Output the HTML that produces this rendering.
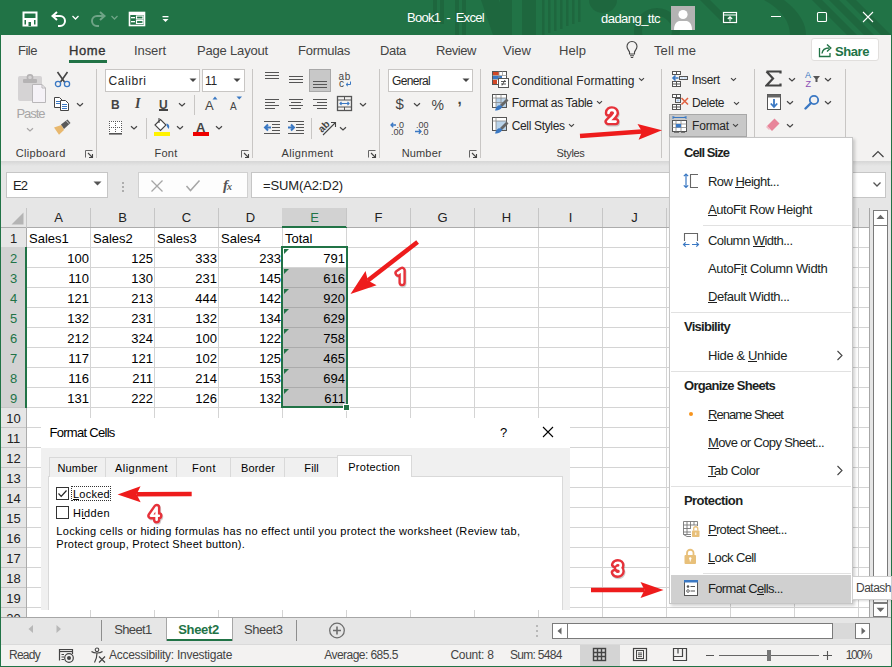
<!DOCTYPE html><html><head><meta charset="utf-8"><style>
html,body{margin:0;padding:0;width:892px;height:667px;overflow:hidden;background:#f3f2f1}
body>div,body>svg{position:absolute}
.t{white-space:nowrap;font-family:"Liberation Sans",sans-serif}
</style></head><body>
<div style="left:0px;top:0px;width:892px;height:667px;background:#f3f2f1"></div>
<div style="left:0px;top:0px;width:892px;height:35px;background:#217346"></div>
<svg style="position:absolute;left:0px;top:0px;" width="892" height="35" viewBox="0 0 892 35">
<g fill="#184f30" opacity="0.32">
<rect x="433" y="0" width="4" height="24"/>
<rect x="440" y="0" width="4" height="24"/>
<rect x="455" y="0" width="4" height="35"/>
<rect x="462" y="0" width="4" height="35"/>
<polygon points="481,0 499,0 511,35 493,35"/>
<rect x="500" y="0" width="12" height="35"/>
<rect x="522" y="0" width="14" height="35" opacity="1"/>
<rect x="542" y="0" width="2.5" height="35"/>
<rect x="548" y="0" width="2.5" height="33"/>
<rect x="554" y="0" width="2.5" height="31"/>
<rect x="560" y="0" width="2.5" height="29"/>
<rect x="566" y="0" width="2.5" height="26"/>
<rect x="572" y="0" width="2.5" height="24"/>
<rect x="578" y="0" width="2.5" height="22"/>
<path d="M589 0 A14 13 0 0 0 617 0 Z"/>
<path d="M764 0 L784 0 C800 12 806 24 806 35 L790 35 C790 22 782 10 764 0 Z"/>
<polygon points="812,0 822,0 857,35 847,35"/>
<polygon points="829,0 839,0 874,35 864,35"/>
<polygon points="846,0 856,0 891,35 881,35"/>
<polygon points="700,0 710,0 735,25 725,25"/>
</g>
<circle cx="657" cy="31" r="19" fill="none" stroke="#184f30" stroke-width="8" opacity="0.32"/>
</svg>
<svg style="position:absolute;left:20px;top:9px;" width="20" height="20" viewBox="0 0 20 20"><rect x="3.5" y="3.5" width="13" height="13" fill="none" stroke="#ffffff" stroke-width="2"/><rect x="4" y="9" width="12" height="2" fill="#ffffff"/><rect x="6" y="10" width="8" height="7" fill="#ffffff"/><rect x="8.5" y="13" width="2.5" height="4" fill="#217346"/></svg>
<svg style="position:absolute;left:49px;top:9px;" width="20" height="18" viewBox="0 0 20 18"><path d="M4 7 H11 A5 5 0 0 1 11 17 H9" fill="none" stroke="#ffffff" stroke-width="2"/><path d="M8 3 L3.5 7 L8 11" fill="none" stroke="#ffffff" stroke-width="2"/></svg>
<svg style="position:absolute;left:71px;top:14px;" width="9" height="7" viewBox="0 0 9 7"><path d="M1.5 2 L4.5 5 L7.5 2" fill="none" stroke="#ffffff" stroke-width="1.3"/></svg>
<svg style="position:absolute;left:88px;top:9px;" width="20" height="18" viewBox="0 0 20 18"><g opacity="0.35"><path d="M16 7 H9 A5 5 0 0 0 9 17 H11" fill="none" stroke="#ffffff" stroke-width="2"/><path d="M12 3 L16.5 7 L12 11" fill="none" stroke="#ffffff" stroke-width="2"/></g></svg>
<svg style="position:absolute;left:110px;top:14px;" width="9" height="7" viewBox="0 0 9 7"><path d="M1.5 2 L4.5 5 L7.5 2" fill="none" stroke="#ffffff" stroke-width="1.3" opacity="0.35"/></svg>
<svg style="position:absolute;left:128px;top:11px;" width="18" height="16" viewBox="0 0 18 16"><rect x="1.5" y="1.5" width="15" height="13" fill="none" stroke="#ffffff" stroke-width="1.6"/><rect x="1" y="1" width="16" height="3" fill="#ffffff"/><rect x="3" y="6" width="4" height="1.3" fill="#ffffff"/><rect x="3" y="10" width="4" height="1.3" fill="#ffffff"/><rect x="8.5" y="5" width="6.5" height="3" fill="none" stroke="#ffffff" stroke-width="1.2"/><rect x="8.5" y="9.5" width="6.5" height="3" fill="none" stroke="#ffffff" stroke-width="1.2"/></svg>
<svg style="position:absolute;left:161px;top:14px;" width="9" height="10" viewBox="0 0 9 10"><rect x="1.5" y="2" width="6" height="1.3" fill="#ffffff"/><path d="M1.5 5 H7.5 L4.5 8 Z" fill="#ffffff"/></svg>
<div class="t" style="left:407.0px;top:11px;font-size:13px;line-height:13px;color:#ffffff;letter-spacing:-0.70px;">Book1 &nbsp;- &nbsp;Excel</div>
<div class="t" style="left:601.0px;top:12px;font-size:13px;line-height:13px;color:#ffffff;letter-spacing:-0.54px;">dadang_ttc</div>
<svg style="position:absolute;left:671px;top:6px;" width="24" height="24" viewBox="0 0 24 24"><rect width="24" height="24" fill="#b3b3b3"/><circle cx="12" cy="8.5" r="4.6" fill="#fff"/><path d="M3 24 C3 17 6.5 15 9 15 H15 C17.5 15 21 17 21 24 Z" fill="#fff"/></svg>
<svg style="position:absolute;left:721px;top:10px;" width="17" height="14" viewBox="0 0 17 14"><rect x="2.5" y="2.5" width="13" height="10" fill="none" stroke="#ffffff" stroke-width="1.2"/><rect x="2" y="4.5" width="14" height="1" fill="#ffffff"/><path d="M9 11.5 V6.8 M6.8 9 L9 6.8 L11.2 9" fill="none" stroke="#ffffff" stroke-width="1.1"/></svg>
<div style="left:771px;top:16px;width:10px;height:1px;background:#fff"></div>
<svg style="position:absolute;left:815px;top:10px;" width="14" height="14" viewBox="0 0 14 14"><rect x="2.5" y="2.5" width="9" height="9" rx="1" fill="none" stroke="#ffffff" stroke-width="1.1"/></svg>
<svg style="position:absolute;left:861px;top:10px;" width="14" height="14" viewBox="0 0 14 14"><path d="M2 2 L12 12 M12 2 L2 12" stroke="#ffffff" stroke-width="1.1"/></svg>
<div class="t" style="left:18.0px;top:44px;font-size:13px;line-height:13px;color:#444444;letter-spacing:-0.49px;">File</div>
<div class="t" style="left:69.0px;top:44px;font-size:13px;line-height:13px;color:#333333;letter-spacing:0.58px;-webkit-text-stroke:0.35px #333;">Home</div>
<div class="t" style="left:134.0px;top:44px;font-size:13px;line-height:13px;color:#444444;letter-spacing:-0.09px;">Insert</div>
<div class="t" style="left:197.0px;top:44px;font-size:13px;line-height:13px;color:#444444;letter-spacing:-0.18px;">Page Layout</div>
<div class="t" style="left:298.0px;top:44px;font-size:13px;line-height:13px;color:#444444;letter-spacing:-0.27px;">Formulas</div>
<div class="t" style="left:380.0px;top:44px;font-size:13px;line-height:13px;color:#444444;letter-spacing:-0.37px;">Data</div>
<div class="t" style="left:436.0px;top:44px;font-size:13px;line-height:13px;color:#444444;letter-spacing:-0.44px;">Review</div>
<div class="t" style="left:503.0px;top:44px;font-size:13px;line-height:13px;color:#444444;letter-spacing:0.01px;">View</div>
<div class="t" style="left:559.0px;top:44px;font-size:13px;line-height:13px;color:#444444;letter-spacing:0.06px;">Help</div>
<div class="t" style="left:654.0px;top:44px;font-size:13px;line-height:13px;color:#444444;letter-spacing:0.12px;">Tell me</div>
<div style="left:69px;top:60px;width:38px;height:3px;background:#217346"></div>
<svg style="position:absolute;left:624px;top:39px;" width="16" height="20" viewBox="0 0 16 20"><path d="M8 2.5 C4.6 2.5 3 5 3 7.5 C3 10 5 11.5 5.5 13 V15 H10.5 V13 C11 11.5 13 10 13 7.5 C13 5 11.4 2.5 8 2.5 Z" fill="none" stroke="#444" stroke-width="1.1"/><path d="M6 16.8 H10 M6.8 18.5 H9.2" stroke="#444" stroke-width="1.1"/></svg>
<div style="left:811px;top:38px;width:68px;height:23px;background:#fff;border:1px solid #e1dfdd;border-radius:3px;box-sizing:border-box"></div>
<svg style="position:absolute;left:818px;top:42px;" width="15" height="16" viewBox="0 0 15 16"><path d="M1.5 6 V14.5 H12 V11" fill="none" stroke="#217346" stroke-width="1.3"/><path d="M4 11.5 C4.5 7.5 7 6 11 6" fill="none" stroke="#217346" stroke-width="1.4"/><path d="M9 2.5 L12.8 6 L9 9.5" fill="none" stroke="#217346" stroke-width="1.4"/></svg>
<div class="t" style="left:835.0px;top:45px;font-size:13px;line-height:13px;color:#217346;letter-spacing:-0.43px;font-weight:bold;">Share</div>
<svg style="position:absolute;left:16px;top:71px;" width="32" height="34" viewBox="0 0 32 34"><rect x="2" y="5" width="24" height="25" rx="2" fill="#d5d3d4"/>
<rect x="7" y="8" width="14" height="4" rx="1" fill="#b5b3b4"/><circle cx="14" cy="6.5" r="2.6" fill="none" stroke="#b5b3b4" stroke-width="1.6"/>
<path d="M16.5 13.5 H26 L29.5 17 V31.5 H16.5 Z" fill="#f5f2f7" stroke="#b9b7b9" stroke-width="1"/><path d="M26 13.5 V17 H29.5" fill="none" stroke="#b9b7b9" stroke-width="1"/></svg>
<div class="t" style="left:16.5px;top:107px;font-size:13px;line-height:13px;color:#a8a6a6;letter-spacing:-1.05px;">Paste</div>
<svg style="position:absolute;left:26px;top:127px;" width="8" height="6" viewBox="0 0 8 6"><path d="M1 1.2 L4.0 4 L7 1.2" fill="none" stroke="#a8a6a6" stroke-width="1.2"/></svg>
<svg style="position:absolute;left:54px;top:71px;" width="17" height="17" viewBox="0 0 17 17"><path d="M3.5 1 L10.5 11 M13.5 1 L6.5 11" stroke="#444" stroke-width="1.6"/>
<circle cx="4" cy="13" r="2.6" fill="none" stroke="#3a78c3" stroke-width="1.3"/><circle cx="13" cy="13" r="2.6" fill="none" stroke="#3a78c3" stroke-width="1.3"/></svg>
<svg style="position:absolute;left:53px;top:96px;" width="18" height="16" viewBox="0 0 18 16"><path d="M1.5 1.5 H6.5 L9.5 4.5 V11.5 H1.5 Z" fill="#fff" stroke="#444" stroke-width="1"/>
<rect x="3" y="5" width="4" height="1" fill="#3a78c3"/><rect x="3" y="7" width="4" height="1" fill="#3a78c3"/>
<path d="M7.5 4.5 H12.5 L15.5 7.5 V14.5 H7.5 Z" fill="#fff" stroke="#444" stroke-width="1"/>
<rect x="9" y="8" width="5" height="1" fill="#3a78c3"/><rect x="9" y="10" width="5" height="1" fill="#3a78c3"/><rect x="9" y="12" width="5" height="1" fill="#3a78c3"/></svg>
<svg style="position:absolute;left:76px;top:102px;" width="8" height="6" viewBox="0 0 8 6"><path d="M1 1.2 L4.0 4 L7 1.2" fill="none" stroke="#444444" stroke-width="1.2"/></svg>
<svg style="position:absolute;left:53px;top:118px;" width="19" height="19" viewBox="0 0 19 19"><path d="M1 9.5 L8.5 7 L11 12 L6 16.8 Z" fill="#e8b86e"/>
<path d="M8 6.5 L14.5 1.5 L17.5 5 L11 11 Z" fill="#5a5a5a"/><path d="M13.2 2.7 L15.8 5.6" stroke="#f3f2f1" stroke-width="0.8"/></svg>
<div class="t" style="left:15.7px;top:148px;font-size:11px;line-height:11px;color:#3b3a39;letter-spacing:0.32px;">Clipboard</div>
<svg style="position:absolute;left:85px;top:150px;" width="9" height="8" viewBox="0 0 9 8"><path d="M0.5 7.5 V0.5 H7.5" fill="none" stroke="#666" stroke-width="1"/><path d="M3 3 L7.5 7.5 M7.5 4 V7.5 H4" fill="none" stroke="#444" stroke-width="1.1"/></svg>
<div style="left:96px;top:69px;width:1px;height:89px;background:#c8c6c4"></div>
<div style="left:105px;top:69px;width:95px;height:23px;background:#fff;border:1px solid #c8c6c4;box-sizing:border-box"></div>
<div class="t" style="left:108.5px;top:75px;font-size:12px;line-height:12px;color:#262626;letter-spacing:0.57px;">Calibri</div>
<svg style="position:absolute;left:189px;top:78px;" width="8" height="5" viewBox="0 0 8 5"><path d="M0.5 0.5 H7.5 L4 4 Z" fill="#444"/></svg>
<div style="left:202px;top:69px;width:43px;height:23px;background:#fff;border:1px solid #c8c6c4;box-sizing:border-box"></div>
<div class="t" style="left:205.0px;top:75px;font-size:12px;line-height:12px;color:#262626;letter-spacing:-0.23px;">11</div>
<svg style="position:absolute;left:233px;top:78px;" width="8" height="5" viewBox="0 0 8 5"><path d="M0.5 0.5 H7.5 L4 4 Z" fill="#444"/></svg>
<div class="t" style="left:111.0px;top:99px;font-size:12px;line-height:12px;color:#444444;letter-spacing:-0.67px;font-weight:bold;">B</div>
<div class="t" style="left:135.0px;top:97px;font-size:14px;line-height:14px;color:#444444;letter-spacing:4.11px;font-weight:bold;font-family:'Liberation Serif',serif;font-style:italic;">I</div>
<div class="t" style="left:159.0px;top:99px;font-size:12px;line-height:12px;color:#444444;letter-spacing:0.33px;font-weight:bold;">U</div>
<div style="left:159px;top:109px;width:9px;height:1.5px;background:#444444"></div>
<svg style="position:absolute;left:177.5px;top:102px;" width="8" height="6" viewBox="0 0 8 6"><path d="M1 1.2 L4.0 4 L7 1.2" fill="none" stroke="#444444" stroke-width="1.2"/></svg>
<div style="left:194px;top:95px;width:1px;height:20px;background:#c8c6c4"></div>
<div class="t" style="left:205.0px;top:99px;font-size:13px;line-height:13px;color:#444444;letter-spacing:0.83px;">A</div>
<svg style="position:absolute;left:212px;top:96px;" width="7" height="4" viewBox="0 0 7 4"><path d="M0.5 3.5 L3 0.5 L5.5 3.5 Z" fill="#3a78c3"/></svg>
<div class="t" style="left:230.0px;top:102px;font-size:10px;line-height:10px;color:#444444;letter-spacing:0.83px;">A</div>
<svg style="position:absolute;left:236px;top:96px;" width="7" height="4" viewBox="0 0 7 4"><path d="M0.5 0.5 H6 L3.25 3.5 Z" fill="#3a78c3"/></svg>
<svg style="position:absolute;left:108px;top:119px;" width="16" height="16" viewBox="0 0 16 16"><rect x="1" y="2" width="13" height="12" fill="#fff"/><rect x="1" y="2" width="1" height="1" fill="#5a5a5a"/><rect x="3" y="2" width="1" height="1" fill="#5a5a5a"/><rect x="5" y="2" width="1" height="1" fill="#5a5a5a"/><rect x="7" y="2" width="1" height="1" fill="#5a5a5a"/><rect x="9" y="2" width="1" height="1" fill="#5a5a5a"/><rect x="11" y="2" width="1" height="1" fill="#5a5a5a"/><rect x="13" y="2" width="1" height="1" fill="#5a5a5a"/><rect x="1" y="4" width="1" height="1" fill="#5a5a5a"/><rect x="7" y="4" width="1" height="1" fill="#5a5a5a"/><rect x="13" y="4" width="1" height="1" fill="#5a5a5a"/><rect x="1" y="6" width="1" height="1" fill="#5a5a5a"/><rect x="7" y="6" width="1" height="1" fill="#5a5a5a"/><rect x="13" y="6" width="1" height="1" fill="#5a5a5a"/><rect x="1" y="8" width="1" height="1" fill="#5a5a5a"/><rect x="3" y="8" width="1" height="1" fill="#5a5a5a"/><rect x="5" y="8" width="1" height="1" fill="#5a5a5a"/><rect x="7" y="8" width="1" height="1" fill="#5a5a5a"/><rect x="9" y="8" width="1" height="1" fill="#5a5a5a"/><rect x="11" y="8" width="1" height="1" fill="#5a5a5a"/><rect x="13" y="8" width="1" height="1" fill="#5a5a5a"/><rect x="1" y="10" width="1" height="1" fill="#5a5a5a"/><rect x="7" y="10" width="1" height="1" fill="#5a5a5a"/><rect x="13" y="10" width="1" height="1" fill="#5a5a5a"/><rect x="1" y="12" width="1" height="1" fill="#5a5a5a"/><rect x="7" y="12" width="1" height="1" fill="#5a5a5a"/><rect x="13" y="12" width="1" height="1" fill="#5a5a5a"/><rect x="1" y="14" width="13" height="1.6" fill="#555"/></svg>
<svg style="position:absolute;left:129.5px;top:125px;" width="8" height="6" viewBox="0 0 8 6"><path d="M1 1.2 L4.0 4 L7 1.2" fill="none" stroke="#444444" stroke-width="1.2"/></svg>
<div style="left:146px;top:118px;width:1px;height:21px;background:#c8c6c4"></div>
<svg style="position:absolute;left:152px;top:117px;" width="20" height="16" viewBox="0 0 20 16"><path d="M3 8 L8.5 2.5 L14 8 L8.5 13.5 Z" fill="#fff" stroke="#444" stroke-width="1.1"/><path d="M7 1 V6" stroke="#444" stroke-width="1.1"/><path d="M14.5 6.5 C17 7 18 9.5 16.5 12 C15.5 10.5 14.5 9 14.5 6.5 Z" fill="#3a78c3"/></svg>
<div style="left:154px;top:132px;width:16px;height:4px;background:#fff200"></div>
<svg style="position:absolute;left:175.5px;top:125px;" width="8" height="6" viewBox="0 0 8 6"><path d="M1 1.2 L4.0 4 L7 1.2" fill="none" stroke="#444444" stroke-width="1.2"/></svg>
<div class="t" style="left:196.0px;top:121px;font-size:13px;line-height:13px;color:#444444;letter-spacing:1.11px;font-weight:bold;">A</div>
<div style="left:193px;top:132px;width:16px;height:4px;background:#ee0000"></div>
<svg style="position:absolute;left:214.5px;top:125px;" width="8" height="6" viewBox="0 0 8 6"><path d="M1 1.2 L4.0 4 L7 1.2" fill="none" stroke="#444444" stroke-width="1.2"/></svg>
<div class="t" style="left:154.5px;top:148px;font-size:11px;line-height:11px;color:#3b3a39;letter-spacing:0.24px;">Font</div>
<svg style="position:absolute;left:241px;top:150px;" width="9" height="8" viewBox="0 0 9 8"><path d="M0.5 7.5 V0.5 H7.5" fill="none" stroke="#666" stroke-width="1"/><path d="M3 3 L7.5 7.5 M7.5 4 V7.5 H4" fill="none" stroke="#444" stroke-width="1.1"/></svg>
<div style="left:252px;top:69px;width:1px;height:89px;background:#c8c6c4"></div>
<div style="left:265px;top:72px;width:14px;height:1px;background:#555555"></div>
<div style="left:265px;top:75px;width:14px;height:1px;background:#555555"></div>
<div style="left:265px;top:78px;width:14px;height:1px;background:#555555"></div>
<div style="left:289px;top:76px;width:14px;height:1px;background:#555555"></div>
<div style="left:289px;top:79px;width:14px;height:1px;background:#555555"></div>
<div style="left:289px;top:82px;width:14px;height:1px;background:#555555"></div>
<div style="left:309px;top:69px;width:22px;height:23px;background:#c8c8c8;border:1px solid #a8a8a8;box-sizing:border-box"></div>
<div style="left:313px;top:81px;width:14px;height:1px;background:#555555"></div>
<div style="left:313px;top:84px;width:14px;height:1px;background:#555555"></div>
<div style="left:313px;top:87px;width:14px;height:1px;background:#555555"></div>
<div class="t" style="left:338.5px;top:72px;font-size:10px;line-height:10px;color:#444444;letter-spacing:0.69px;">ab</div>
<div class="t" style="left:339.0px;top:79px;font-size:10px;line-height:10px;color:#444444;letter-spacing:1.00px;">c</div>
<svg style="position:absolute;left:345px;top:81px;" width="7" height="6" viewBox="0 0 7 6"><path d="M5.5 0.5 V3.5 H1.2 M3 1.8 L1 3.5 L3 5.2" fill="none" stroke="#3a78c3" stroke-width="1"/></svg>
<div style="left:265px;top:99px;width:14px;height:1px;background:#555555"></div>
<div style="left:289px;top:99px;width:14px;height:1px;background:#555555"></div>
<div style="left:313px;top:99px;width:14px;height:1px;background:#555555"></div>
<div style="left:265px;top:102px;width:10px;height:1px;background:#555555"></div>
<div style="left:291px;top:102px;width:10px;height:1px;background:#555555"></div>
<div style="left:317px;top:102px;width:10px;height:1px;background:#555555"></div>
<div style="left:265px;top:105px;width:14px;height:1px;background:#555555"></div>
<div style="left:289px;top:105px;width:14px;height:1px;background:#555555"></div>
<div style="left:313px;top:105px;width:14px;height:1px;background:#555555"></div>
<div style="left:265px;top:108px;width:10px;height:1px;background:#555555"></div>
<div style="left:291px;top:108px;width:10px;height:1px;background:#555555"></div>
<div style="left:317px;top:108px;width:10px;height:1px;background:#555555"></div>
<svg style="position:absolute;left:336px;top:95px;" width="17" height="17" viewBox="0 0 17 17"><rect x="1.5" y="1.5" width="14" height="14" fill="none" stroke="#555" stroke-width="1.3"/><path d="M1.5 5 H15.5 M1.5 12 H15.5 M8.5 1.5 V5 M8.5 12 V15.5" stroke="#555" stroke-width="1"/><path d="M4 8.5 H13 M5.5 7 L4 8.5 L5.5 10 M11.5 7 L13 8.5 L11.5 10" fill="none" stroke="#3a78c3" stroke-width="1.1"/></svg>
<svg style="position:absolute;left:359px;top:102px;" width="8" height="6" viewBox="0 0 8 6"><path d="M1 1.2 L4.0 4 L7 1.2" fill="none" stroke="#444444" stroke-width="1.2"/></svg>
<svg style="position:absolute;left:263px;top:120px;" width="18" height="15" viewBox="0 0 18 15"><path d="M1 1.5 H17 M9 4.5 H17 M9 7.5 H17 M9 10.5 H17 M1 13.5 H17" stroke="#555" stroke-width="1"/><path d="M2 7.5 H8 M5 4.5 L2 7.5 L5 10.5" fill="none" stroke="#3a78c3" stroke-width="2"/></svg>
<svg style="position:absolute;left:287px;top:120px;" width="18" height="15" viewBox="0 0 18 15"><path d="M1 1.5 H17 M9 4.5 H17 M9 7.5 H17 M9 10.5 H17 M1 13.5 H17" stroke="#555" stroke-width="1"/><path d="M1 7.5 H7 M4 4.5 L7 7.5 L4 10.5" fill="none" stroke="#3a78c3" stroke-width="2"/></svg>
<div style="left:311px;top:118px;width:1px;height:21px;background:#c8c6c4"></div>
<svg style="position:absolute;left:318px;top:119px;" width="19" height="17" viewBox="0 0 19 17"><text x="0" y="0" transform="translate(4,14) rotate(-45)" font-family="Liberation Sans" font-weight="bold" font-size="10" fill="#444">ab</text><path d="M5 16 L17 4 M13 3.5 H17.5 V8" fill="none" stroke="#444" stroke-width="1.1"/></svg>
<svg style="position:absolute;left:339px;top:126px;" width="8" height="6" viewBox="0 0 8 6"><path d="M1 1.2 L4.0 4 L7 1.2" fill="none" stroke="#444444" stroke-width="1.2"/></svg>
<div class="t" style="left:281.5px;top:148px;font-size:11px;line-height:11px;color:#3b3a39;letter-spacing:0.34px;">Alignment</div>
<svg style="position:absolute;left:368px;top:150px;" width="9" height="8" viewBox="0 0 9 8"><path d="M0.5 7.5 V0.5 H7.5" fill="none" stroke="#666" stroke-width="1"/><path d="M3 3 L7.5 7.5 M7.5 4 V7.5 H4" fill="none" stroke="#444" stroke-width="1.1"/></svg>
<div style="left:379px;top:69px;width:1px;height:89px;background:#c8c6c4"></div>
<div style="left:388px;top:69px;width:85px;height:23px;background:#fff;border:1px solid #c8c6c4;box-sizing:border-box"></div>
<div class="t" style="left:392.0px;top:75px;font-size:12px;line-height:12px;color:#262626;letter-spacing:-0.67px;">General</div>
<svg style="position:absolute;left:462px;top:78px;" width="8" height="5" viewBox="0 0 8 5"><path d="M0.5 0.5 H7.5 L4 4 Z" fill="#444"/></svg>
<div class="t" style="left:395.5px;top:96px;font-size:15px;line-height:15px;color:#444444;letter-spacing:-0.34px;">$</div>
<svg style="position:absolute;left:413px;top:102px;" width="8" height="6" viewBox="0 0 8 6"><path d="M1 1.2 L4.0 4 L7 1.2" fill="none" stroke="#444444" stroke-width="1.2"/></svg>
<div class="t" style="left:431.5px;top:98px;font-size:14px;line-height:14px;color:#444444;letter-spacing:0.55px;">%</div>
<div class="t" style="left:457.5px;top:91px;font-size:15px;line-height:15px;color:#444444;letter-spacing:0.83px;font-weight:bold;">,</div>
<svg style="position:absolute;left:390px;top:120px;" width="17" height="16" viewBox="0 0 17 16"><path d="M1 5 H6 M3.2 2.8 L1 5 L3.2 7.2" fill="none" stroke="#3a78c3" stroke-width="1.3"/><text x="6.5" y="8" font-family="Liberation Sans" font-size="9" fill="#444">.0</text><text x="1" y="14.5" font-family="Liberation Sans" font-size="9" fill="#444">.00</text></svg>
<svg style="position:absolute;left:414px;top:120px;" width="17" height="16" viewBox="0 0 17 16"><text x="2" y="8" font-family="Liberation Sans" font-size="9" fill="#444">.00</text><path d="M1 11.5 H7 M4.8 9.3 L7 11.5 L4.8 13.7" fill="none" stroke="#3a78c3" stroke-width="1.3"/><text x="7" y="14.5" font-family="Liberation Sans" font-size="9" fill="#444">.0</text></svg>
<div class="t" style="left:401.7px;top:148px;font-size:11px;line-height:11px;color:#3b3a39;letter-spacing:0.15px;">Number</div>
<svg style="position:absolute;left:469px;top:150px;" width="9" height="8" viewBox="0 0 9 8"><path d="M0.5 7.5 V0.5 H7.5" fill="none" stroke="#666" stroke-width="1"/><path d="M3 3 L7.5 7.5 M7.5 4 V7.5 H4" fill="none" stroke="#444" stroke-width="1.1"/></svg>
<div style="left:480px;top:69px;width:1px;height:89px;background:#c8c6c4"></div>
<svg style="position:absolute;left:491px;top:70px;" width="18" height="18" viewBox="0 0 18 18"><rect x="1.5" y="1.5" width="14" height="13" fill="#fff" stroke="#555" stroke-width="1"/>
<rect x="2" y="2" width="6" height="3.5" fill="#d24726"/><rect x="2" y="6" width="9" height="3" fill="#3a78c3"/><rect x="2" y="10" width="4" height="4" fill="#d24726"/>
<path d="M8 1.5 V14 M11.5 1.5 V6 M1.5 5.5 H15.5 M1.5 9.5 H8" stroke="#999" stroke-width="0.8"/>
<rect x="7.5" y="8.5" width="10" height="9" fill="#fff" stroke="#555" stroke-width="1"/><path d="M10 11.5 H15 M10 14 H15 M14 10 L11 15.5" stroke="#444" stroke-width="0.9"/></svg>
<div class="t" style="left:511.7px;top:75px;font-size:12px;line-height:12px;color:#262626;letter-spacing:0.10px;">Conditional Formatting</div>
<svg style="position:absolute;left:638px;top:77px;" width="7" height="5.5" viewBox="0 0 7 5.5"><path d="M1 1.2 L3.5 3.5 L6 1.2" fill="none" stroke="#444444" stroke-width="1.1"/></svg>
<svg style="position:absolute;left:491px;top:93px;" width="18" height="18" viewBox="0 0 18 18"><rect x="1.5" y="1.5" width="14" height="13" fill="#fff" stroke="#555" stroke-width="1"/>
<rect x="5" y="5" width="10" height="9" fill="#b9d3ea"/>
<path d="M1.5 5 H15.5 M1.5 9.5 H15.5 M5 1.5 V14.5 M10 1.5 V14.5" stroke="#888" stroke-width="0.8"/>
<path d="M9 12 L15.5 5.5 L17.5 7.5 L11 14 Z" fill="#666"/><path d="M4 17.5 C5 13 8 11 11 13 C11.5 15.5 8 17.5 4 17.5 Z" fill="#3a78c3"/></svg>
<div class="t" style="left:511.7px;top:97px;font-size:12px;line-height:12px;color:#262626;letter-spacing:-0.32px;">Format as Table</div>
<svg style="position:absolute;left:596px;top:100px;" width="7" height="5.5" viewBox="0 0 7 5.5"><path d="M1 1.2 L3.5 3.5 L6 1.2" fill="none" stroke="#444444" stroke-width="1.1"/></svg>
<svg style="position:absolute;left:491px;top:116px;" width="18" height="18" viewBox="0 0 18 18"><rect x="1.5" y="1.5" width="14" height="13" fill="#fff" stroke="#555" stroke-width="1"/>
<rect x="5" y="5" width="10" height="9" fill="#b9d3ea"/>
<path d="M1.5 5 H15.5 M5 1.5 V14.5" stroke="#888" stroke-width="0.8"/>
<path d="M9 12 L15.5 5.5 L17.5 7.5 L11 14 Z" fill="#666"/><path d="M4 17.5 C5 13 8 11 11 13 C11.5 15.5 8 17.5 4 17.5 Z" fill="#3a78c3"/></svg>
<div class="t" style="left:511.7px;top:120px;font-size:12px;line-height:12px;color:#262626;letter-spacing:-0.34px;">Cell Styles</div>
<svg style="position:absolute;left:568px;top:123px;" width="7" height="5.5" viewBox="0 0 7 5.5"><path d="M1 1.2 L3.5 3.5 L6 1.2" fill="none" stroke="#444444" stroke-width="1.1"/></svg>
<div class="t" style="left:556.5px;top:148px;font-size:11px;line-height:11px;color:#3b3a39;letter-spacing:-0.33px;">Styles</div>
<div style="left:661px;top:69px;width:1px;height:89px;background:#c8c6c4"></div>
<svg style="position:absolute;left:670px;top:69px;" width="20" height="19" viewBox="0 0 20 19"><g fill="#fff" stroke="#555" stroke-width="1">
<rect x="2.5" y="2.5" width="8" height="3"/><path d="M6.5 2.5 V5.5"/>
<rect x="2.5" y="12.5" width="8" height="5"/><path d="M6.5 12.5 V17.5 M2.5 15 H10.5"/>
<rect x="9.5" y="7.5" width="8" height="3"/></g>
<rect x="10.5" y="8.5" width="3" height="1" fill="#a9c6e8"/><rect x="14" y="8.5" width="3" height="1" fill="#a9c6e8"/>
<path d="M3 9 H8.5 M5.5 6.5 L3 9 L5.5 11.5" fill="none" stroke="#3a78c3" stroke-width="1.6"/></svg>
<div class="t" style="left:691.7px;top:74px;font-size:12px;line-height:12px;color:#262626;letter-spacing:-0.33px;">Insert</div>
<svg style="position:absolute;left:730px;top:77px;" width="7" height="5.5" viewBox="0 0 7 5.5"><path d="M1 1.2 L3.5 3.5 L6 1.2" fill="none" stroke="#444444" stroke-width="1.1"/></svg>
<svg style="position:absolute;left:670px;top:92px;" width="20" height="19" viewBox="0 0 20 19"><g fill="#fff" stroke="#555" stroke-width="1">
<rect x="2.5" y="2.5" width="8" height="3"/><path d="M6.5 2.5 V5.5"/>
<rect x="2.5" y="12.5" width="8" height="5"/><path d="M6.5 12.5 V17.5 M2.5 15 H10.5"/>
<rect x="5.5" y="6.5" width="5" height="4"/></g>
<rect x="6.5" y="7.5" width="3" height="2" fill="#a9c6e8"/>
<path d="M11.5 6 L18 12.5 M18 6 L11.5 12.5" stroke="#e0603f" stroke-width="1.5"/></svg>
<div class="t" style="left:692.0px;top:97px;font-size:12px;line-height:12px;color:#262626;letter-spacing:-0.45px;">Delete</div>
<svg style="position:absolute;left:733px;top:101px;" width="7" height="5.5" viewBox="0 0 7 5.5"><path d="M1 1.2 L3.5 3.5 L6 1.2" fill="none" stroke="#444444" stroke-width="1.1"/></svg>
<div style="left:669px;top:114px;width:78px;height:23px;background:#c8c8c8;border:1px solid #a8a8a8;box-sizing:border-box"></div>
<svg style="position:absolute;left:671px;top:116px;" width="18" height="18" viewBox="0 0 18 18"><path d="M2 1.5 H15 M2 0 V3 M15 0 V3" stroke="#3a78c3" stroke-width="1"/><path d="M4 1.5 L3 0.5 M13 1.5 L14 0.5" stroke="#3a78c3"/>
<rect x="1.5" y="4.5" width="14" height="11" fill="#fff" stroke="#555"/><path d="M1.5 8 H15.5 M1.5 11.5 H15.5 M5 4.5 V15.5 M10 4.5 V15.5" stroke="#888" stroke-width="0.8"/>
<rect x="5" y="8" width="5" height="3.5" fill="#3a78c3"/><path d="M3 16.5 H8 M10 16.5 H14" stroke="#777"/></svg>
<div class="t" style="left:692.0px;top:120px;font-size:12px;line-height:12px;color:#262626;letter-spacing:-0.17px;">Format</div>
<svg style="position:absolute;left:732px;top:123px;" width="7" height="5.5" viewBox="0 0 7 5.5"><path d="M1 1.2 L3.5 3.5 L6 1.2" fill="none" stroke="#444444" stroke-width="1.1"/></svg>
<div style="left:754px;top:69px;width:1px;height:89px;background:#c8c6c4"></div>
<svg style="position:absolute;left:765px;top:70px;" width="18" height="17" viewBox="0 0 18 17"><path d="M1.5 1.5 H15.5 V3.5 M1.5 1.5 L8 8.5 L1.5 15.5 H15.5 V13.5" fill="none" stroke="#444" stroke-width="2.2" stroke-linejoin="miter"/></svg>
<svg style="position:absolute;left:788px;top:77px;" width="8" height="6" viewBox="0 0 8 6"><path d="M1 1.2 L4.0 4 L7 1.2" fill="none" stroke="#444444" stroke-width="1.2"/></svg>
<svg style="position:absolute;left:804px;top:70px;" width="18" height="18" viewBox="0 0 18 18"><text x="1" y="8" font-family="Liberation Sans" font-size="9" fill="#3a78c3">A</text><text x="1.5" y="17" font-family="Liberation Sans" font-size="9" fill="#8a4fb5">Z</text><path d="M9 6 H16 L13.5 9 V12 L11.5 12 V9 Z" fill="#555"/></svg>
<svg style="position:absolute;left:824px;top:77px;" width="8" height="6" viewBox="0 0 8 6"><path d="M1 1.2 L4.0 4 L7 1.2" fill="none" stroke="#444444" stroke-width="1.2"/></svg>
<svg style="position:absolute;left:766px;top:93px;" width="16" height="18" viewBox="0 0 16 18"><rect x="1.5" y="1.5" width="13" height="15" fill="#fff" stroke="#555"/><rect x="1.5" y="1.5" width="13" height="3" fill="#666"/><path d="M8 6 V14 M4.8 10.5 L8 14 L11.2 10.5" fill="none" stroke="#3a78c3" stroke-width="1.8"/></svg>
<svg style="position:absolute;left:786px;top:100px;" width="8" height="6" viewBox="0 0 8 6"><path d="M1 1.2 L4.0 4 L7 1.2" fill="none" stroke="#444444" stroke-width="1.2"/></svg>
<svg style="position:absolute;left:803px;top:94px;" width="18" height="16" viewBox="0 0 18 16"><circle cx="11" cy="6" r="4.2" fill="none" stroke="#3a78c3" stroke-width="1.8"/><path d="M8 9 L2.5 14.5" stroke="#3a78c3" stroke-width="2.4" stroke-linecap="round"/></svg>
<svg style="position:absolute;left:824px;top:100px;" width="8" height="6" viewBox="0 0 8 6"><path d="M1 1.2 L4.0 4 L7 1.2" fill="none" stroke="#444444" stroke-width="1.2"/></svg>
<svg style="position:absolute;left:765px;top:116px;" width="17" height="16" viewBox="0 0 17 16"><path d="M2 10 L9.5 2.5 L14.5 7.5 L7 15 Z" fill="#e8859a"/><path d="M2 10 L5 13 L4 14 L1 11 Z" fill="#f2b8c4"/></svg>
<svg style="position:absolute;left:786px;top:123px;" width="8" height="6" viewBox="0 0 8 6"><path d="M1 1.2 L4.0 4 L7 1.2" fill="none" stroke="#444444" stroke-width="1.2"/></svg>
<div style="left:845px;top:69px;width:1px;height:89px;background:#c8c6c4"></div>
<svg style="position:absolute;left:871px;top:150px;" width="14" height="9" viewBox="0 0 14 9"><path d="M1.5 7 L7 1.5 L12.5 7" fill="none" stroke="#444" stroke-width="1.2"/></svg>
<div style="left:1px;top:161px;width:890px;height:1px;background:#dcdcdc"></div>
<div style="left:1px;top:162px;width:890px;height:46px;background:#e6e6e6"></div>
<div style="left:1px;top:161px;width:890px;height:5px;background:linear-gradient(#d6d6d6,#e6e6e6)"></div>
<div style="left:6px;top:172px;width:102px;height:26px;background:#fff;border:1px solid #c6c6c6;box-sizing:border-box"></div>
<div class="t" style="left:13.0px;top:179px;font-size:13px;line-height:13px;color:#222;letter-spacing:-0.95px;">E2</div>
<svg style="position:absolute;left:93px;top:181px;" width="9" height="6" viewBox="0 0 9 6"><path d="M0.5 0.5 H8.5 L4.5 4.5 Z" fill="#555"/></svg>
<div style="left:121.5px;top:181.5px;width:2px;height:2px;background:#9a9a9a;border-radius:1px"></div>
<div style="left:121.5px;top:185.5px;width:2px;height:2px;background:#9a9a9a;border-radius:1px"></div>
<div style="left:121.5px;top:189.5px;width:2px;height:2px;background:#9a9a9a;border-radius:1px"></div>
<div style="left:138px;top:172px;width:110px;height:26px;background:#fdfdfd;border:1px solid #d0d0d0;box-sizing:border-box"></div>
<svg style="position:absolute;left:150px;top:179px;" width="14" height="14" viewBox="0 0 14 14"><path d="M1.5 1.5 L12.5 12.5 M12.5 1.5 L1.5 12.5" stroke="#a6a6a6" stroke-width="1.3"/></svg>
<svg style="position:absolute;left:185px;top:179px;" width="16" height="14" viewBox="0 0 16 14"><path d="M1.5 7 L5.5 11.5 L14.5 1.5" fill="none" stroke="#a6a6a6" stroke-width="1.5"/></svg>
<div class="t" style="left:223px;top:178px;font-size:15px;line-height:15px;color:#555;font-family:'Liberation Serif',serif;font-style:italic;font-weight:bold">f<span style="font-size:10px;margin-left:-1px">x</span></div>
<div style="left:251px;top:172px;width:635px;height:26px;background:#fff;border:1px solid #c6c6c6;box-sizing:border-box"></div>
<div class="t" style="left:263.0px;top:179px;font-size:13px;line-height:13px;color:#222;letter-spacing:-0.12px;">=SUM(A2:D2)</div>
<svg style="position:absolute;left:872px;top:181px;" width="11" height="7" viewBox="0 0 11 7"><path d="M1.5 1.5 L5 5 L8.5 1.5" fill="none" stroke="#555" stroke-width="1.3"/></svg>
<div style="left:27px;top:228px;width:843px;height:389px;background:#fff"></div>
<div style="left:1px;top:208px;width:869px;height:20px;background:#e6e6e6"></div>
<div style="left:1px;top:227px;width:869px;height:1px;background:#acacac"></div>
<svg style="position:absolute;left:10px;top:211px;" width="15" height="15" viewBox="0 0 15 15"><path d="M13.5 1.5 V13.5 H1.5 Z" fill="#b4b4b4"/></svg>
<div class="t" style="left:54.2px;top:211px;font-size:13px;line-height:13px;color:#222;letter-spacing:0.00px;">A</div>
<div style="left:90px;top:208px;width:1px;height:19px;background:#c6c6c6"></div>
<div class="t" style="left:118.2px;top:211px;font-size:13px;line-height:13px;color:#222;letter-spacing:0.00px;">B</div>
<div style="left:154px;top:208px;width:1px;height:19px;background:#c6c6c6"></div>
<div class="t" style="left:181.8px;top:211px;font-size:13px;line-height:13px;color:#222;letter-spacing:0.00px;">C</div>
<div style="left:218px;top:208px;width:1px;height:19px;background:#c6c6c6"></div>
<div class="t" style="left:245.8px;top:211px;font-size:13px;line-height:13px;color:#222;letter-spacing:0.00px;">D</div>
<div style="left:282px;top:208px;width:1px;height:19px;background:#c6c6c6"></div>
<div style="left:282px;top:208px;width:65px;height:20px;background:#d2d2d2"></div>
<div style="left:282px;top:226px;width:65px;height:2px;background:#217346"></div>
<div class="t" style="left:310.2px;top:211px;font-size:13px;line-height:13px;color:#217346;letter-spacing:0.00px;">E</div>
<div style="left:346px;top:208px;width:1px;height:19px;background:#c6c6c6"></div>
<div class="t" style="left:374.5px;top:211px;font-size:13px;line-height:13px;color:#222;letter-spacing:0.00px;">F</div>
<div style="left:410px;top:208px;width:1px;height:19px;background:#c6c6c6"></div>
<div class="t" style="left:437.4px;top:211px;font-size:13px;line-height:13px;color:#222;letter-spacing:0.00px;">G</div>
<div style="left:474px;top:208px;width:1px;height:19px;background:#c6c6c6"></div>
<div class="t" style="left:501.8px;top:211px;font-size:13px;line-height:13px;color:#222;letter-spacing:0.00px;">H</div>
<div style="left:538px;top:208px;width:1px;height:19px;background:#c6c6c6"></div>
<div class="t" style="left:568.7px;top:211px;font-size:13px;line-height:13px;color:#222;letter-spacing:0.00px;">I</div>
<div style="left:602px;top:208px;width:1px;height:19px;background:#c6c6c6"></div>
<div class="t" style="left:631.2px;top:211px;font-size:13px;line-height:13px;color:#222;letter-spacing:0.00px;">J</div>
<div style="left:666px;top:208px;width:1px;height:19px;background:#c6c6c6"></div>
<div class="t" style="left:694.2px;top:211px;font-size:13px;line-height:13px;color:#222;letter-spacing:0.00px;">K</div>
<div style="left:730px;top:208px;width:1px;height:19px;background:#c6c6c6"></div>
<div class="t" style="left:758.9px;top:211px;font-size:13px;line-height:13px;color:#222;letter-spacing:0.00px;">L</div>
<div style="left:794px;top:208px;width:1px;height:19px;background:#c6c6c6"></div>
<div class="t" style="left:821.1px;top:211px;font-size:13px;line-height:13px;color:#222;letter-spacing:0.00px;">M</div>
<div style="left:858px;top:208px;width:1px;height:19px;background:#c6c6c6"></div>
<div class="t" style="left:885.8px;top:211px;font-size:13px;line-height:13px;color:#222;letter-spacing:0.00px;">N</div>
<div style="left:26px;top:208px;width:1px;height:20px;background:#c6c6c6"></div>
<div style="left:1px;top:228px;width:26px;height:389px;background:#e6e6e6"></div>
<div class="t" style="left:9.9px;top:232px;font-size:13px;line-height:13px;color:#222;letter-spacing:0.00px;">1</div>
<div style="left:1px;top:247px;width:25px;height:1px;background:#c6c6c6"></div>
<div style="left:1px;top:247px;width:25px;height:21px;background:#d2d2d2"></div>
<div class="t" style="left:9.9px;top:252px;font-size:13px;line-height:13px;color:#217346;letter-spacing:0.00px;">2</div>
<div style="left:1px;top:267px;width:25px;height:1px;background:#c6c6c6"></div>
<div style="left:1px;top:267px;width:25px;height:21px;background:#d2d2d2"></div>
<div class="t" style="left:9.9px;top:272px;font-size:13px;line-height:13px;color:#217346;letter-spacing:0.00px;">3</div>
<div style="left:1px;top:287px;width:25px;height:1px;background:#c6c6c6"></div>
<div style="left:1px;top:287px;width:25px;height:21px;background:#d2d2d2"></div>
<div class="t" style="left:9.9px;top:292px;font-size:13px;line-height:13px;color:#217346;letter-spacing:0.00px;">4</div>
<div style="left:1px;top:307px;width:25px;height:1px;background:#c6c6c6"></div>
<div style="left:1px;top:307px;width:25px;height:21px;background:#d2d2d2"></div>
<div class="t" style="left:9.9px;top:312px;font-size:13px;line-height:13px;color:#217346;letter-spacing:0.00px;">5</div>
<div style="left:1px;top:327px;width:25px;height:1px;background:#c6c6c6"></div>
<div style="left:1px;top:327px;width:25px;height:21px;background:#d2d2d2"></div>
<div class="t" style="left:9.9px;top:332px;font-size:13px;line-height:13px;color:#217346;letter-spacing:0.00px;">6</div>
<div style="left:1px;top:347px;width:25px;height:1px;background:#c6c6c6"></div>
<div style="left:1px;top:347px;width:25px;height:21px;background:#d2d2d2"></div>
<div class="t" style="left:9.9px;top:352px;font-size:13px;line-height:13px;color:#217346;letter-spacing:0.00px;">7</div>
<div style="left:1px;top:367px;width:25px;height:1px;background:#c6c6c6"></div>
<div style="left:1px;top:367px;width:25px;height:21px;background:#d2d2d2"></div>
<div class="t" style="left:9.9px;top:372px;font-size:13px;line-height:13px;color:#217346;letter-spacing:0.00px;">8</div>
<div style="left:1px;top:387px;width:25px;height:1px;background:#c6c6c6"></div>
<div style="left:1px;top:387px;width:25px;height:21px;background:#d2d2d2"></div>
<div class="t" style="left:9.9px;top:392px;font-size:13px;line-height:13px;color:#217346;letter-spacing:0.00px;">9</div>
<div style="left:1px;top:407px;width:25px;height:1px;background:#c6c6c6"></div>
<div class="t" style="left:6.3px;top:412px;font-size:13px;line-height:13px;color:#222;letter-spacing:0.00px;">10</div>
<div style="left:1px;top:427px;width:25px;height:1px;background:#c6c6c6"></div>
<div class="t" style="left:6.8px;top:432px;font-size:13px;line-height:13px;color:#222;letter-spacing:0.00px;">11</div>
<div style="left:1px;top:447px;width:25px;height:1px;background:#c6c6c6"></div>
<div class="t" style="left:6.3px;top:452px;font-size:13px;line-height:13px;color:#222;letter-spacing:0.00px;">12</div>
<div style="left:1px;top:467px;width:25px;height:1px;background:#c6c6c6"></div>
<div class="t" style="left:6.3px;top:472px;font-size:13px;line-height:13px;color:#222;letter-spacing:0.00px;">13</div>
<div style="left:1px;top:487px;width:25px;height:1px;background:#c6c6c6"></div>
<div class="t" style="left:6.3px;top:492px;font-size:13px;line-height:13px;color:#222;letter-spacing:0.00px;">14</div>
<div style="left:1px;top:507px;width:25px;height:1px;background:#c6c6c6"></div>
<div class="t" style="left:6.3px;top:512px;font-size:13px;line-height:13px;color:#222;letter-spacing:0.00px;">15</div>
<div style="left:1px;top:527px;width:25px;height:1px;background:#c6c6c6"></div>
<div class="t" style="left:6.3px;top:532px;font-size:13px;line-height:13px;color:#222;letter-spacing:0.00px;">16</div>
<div style="left:1px;top:547px;width:25px;height:1px;background:#c6c6c6"></div>
<div class="t" style="left:6.3px;top:552px;font-size:13px;line-height:13px;color:#222;letter-spacing:0.00px;">17</div>
<div style="left:1px;top:567px;width:25px;height:1px;background:#c6c6c6"></div>
<div class="t" style="left:6.3px;top:572px;font-size:13px;line-height:13px;color:#222;letter-spacing:0.00px;">18</div>
<div style="left:1px;top:587px;width:25px;height:1px;background:#c6c6c6"></div>
<div class="t" style="left:6.3px;top:592px;font-size:13px;line-height:13px;color:#222;letter-spacing:0.00px;">19</div>
<div style="left:1px;top:607px;width:25px;height:1px;background:#c6c6c6"></div>
<div class="t" style="left:6.3px;top:612px;font-size:13px;line-height:13px;color:#222;letter-spacing:0.00px;">20</div>
<div style="left:26px;top:228px;width:1px;height:389px;background:#acacac"></div>
<div style="left:25px;top:247px;width:2px;height:161px;background:#217346"></div>
<div style="left:27px;top:247px;width:843px;height:1px;background:#d4d4d4"></div>
<div style="left:27px;top:267px;width:843px;height:1px;background:#d4d4d4"></div>
<div style="left:27px;top:287px;width:843px;height:1px;background:#d4d4d4"></div>
<div style="left:27px;top:307px;width:843px;height:1px;background:#d4d4d4"></div>
<div style="left:27px;top:327px;width:843px;height:1px;background:#d4d4d4"></div>
<div style="left:27px;top:347px;width:843px;height:1px;background:#d4d4d4"></div>
<div style="left:27px;top:367px;width:843px;height:1px;background:#d4d4d4"></div>
<div style="left:27px;top:387px;width:843px;height:1px;background:#d4d4d4"></div>
<div style="left:27px;top:407px;width:843px;height:1px;background:#d4d4d4"></div>
<div style="left:27px;top:427px;width:843px;height:1px;background:#d4d4d4"></div>
<div style="left:27px;top:447px;width:843px;height:1px;background:#d4d4d4"></div>
<div style="left:27px;top:467px;width:843px;height:1px;background:#d4d4d4"></div>
<div style="left:27px;top:487px;width:843px;height:1px;background:#d4d4d4"></div>
<div style="left:27px;top:507px;width:843px;height:1px;background:#d4d4d4"></div>
<div style="left:27px;top:527px;width:843px;height:1px;background:#d4d4d4"></div>
<div style="left:27px;top:547px;width:843px;height:1px;background:#d4d4d4"></div>
<div style="left:27px;top:567px;width:843px;height:1px;background:#d4d4d4"></div>
<div style="left:27px;top:587px;width:843px;height:1px;background:#d4d4d4"></div>
<div style="left:27px;top:607px;width:843px;height:1px;background:#d4d4d4"></div>
<div style="left:90px;top:228px;width:1px;height:389px;background:#d4d4d4"></div>
<div style="left:154px;top:228px;width:1px;height:389px;background:#d4d4d4"></div>
<div style="left:218px;top:228px;width:1px;height:389px;background:#d4d4d4"></div>
<div style="left:282px;top:228px;width:1px;height:389px;background:#d4d4d4"></div>
<div style="left:346px;top:228px;width:1px;height:389px;background:#d4d4d4"></div>
<div style="left:410px;top:228px;width:1px;height:389px;background:#d4d4d4"></div>
<div style="left:474px;top:228px;width:1px;height:389px;background:#d4d4d4"></div>
<div style="left:538px;top:228px;width:1px;height:389px;background:#d4d4d4"></div>
<div style="left:602px;top:228px;width:1px;height:389px;background:#d4d4d4"></div>
<div style="left:666px;top:228px;width:1px;height:389px;background:#d4d4d4"></div>
<div style="left:730px;top:228px;width:1px;height:389px;background:#d4d4d4"></div>
<div style="left:794px;top:228px;width:1px;height:389px;background:#d4d4d4"></div>
<div style="left:858px;top:228px;width:1px;height:389px;background:#d4d4d4"></div>
<div style="left:869px;top:208px;width:1px;height:409px;background:#a6a6a6"></div>
<div style="left:283px;top:268px;width:63px;height:138px;background:#c6c6c6"></div>
<div style="left:283px;top:287px;width:63px;height:1px;background:#ababab"></div>
<div style="left:283px;top:307px;width:63px;height:1px;background:#ababab"></div>
<div style="left:283px;top:327px;width:63px;height:1px;background:#ababab"></div>
<div style="left:283px;top:347px;width:63px;height:1px;background:#ababab"></div>
<div style="left:283px;top:367px;width:63px;height:1px;background:#ababab"></div>
<div style="left:283px;top:387px;width:63px;height:1px;background:#ababab"></div>
<div class="t" style="left:29.0px;top:232px;font-size:13px;line-height:13px;color:#000;letter-spacing:0.00px;">Sales1</div>
<div class="t" style="left:93.0px;top:232px;font-size:13px;line-height:13px;color:#000;letter-spacing:0.00px;">Sales2</div>
<div class="t" style="left:157.0px;top:232px;font-size:13px;line-height:13px;color:#000;letter-spacing:0.00px;">Sales3</div>
<div class="t" style="left:221.0px;top:232px;font-size:13px;line-height:13px;color:#000;letter-spacing:0.00px;">Sales4</div>
<div class="t" style="left:285.0px;top:232px;font-size:13px;line-height:13px;color:#000;letter-spacing:0.00px;">Total</div>
<div class="t" style="left:67.3px;top:252px;font-size:13px;line-height:13px;color:#000;letter-spacing:0.00px;">100</div>
<div class="t" style="left:131.3px;top:252px;font-size:13px;line-height:13px;color:#000;letter-spacing:0.00px;">125</div>
<div class="t" style="left:195.3px;top:252px;font-size:13px;line-height:13px;color:#000;letter-spacing:0.00px;">333</div>
<div class="t" style="left:259.3px;top:252px;font-size:13px;line-height:13px;color:#000;letter-spacing:0.00px;">233</div>
<div class="t" style="left:323.3px;top:252px;font-size:13px;line-height:13px;color:#000;letter-spacing:0.00px;">791</div>
<div class="t" style="left:68.3px;top:272px;font-size:13px;line-height:13px;color:#000;letter-spacing:0.00px;">110</div>
<div class="t" style="left:131.3px;top:272px;font-size:13px;line-height:13px;color:#000;letter-spacing:0.00px;">130</div>
<div class="t" style="left:195.3px;top:272px;font-size:13px;line-height:13px;color:#000;letter-spacing:0.00px;">231</div>
<div class="t" style="left:259.3px;top:272px;font-size:13px;line-height:13px;color:#000;letter-spacing:0.00px;">145</div>
<div class="t" style="left:323.3px;top:272px;font-size:13px;line-height:13px;color:#000;letter-spacing:0.00px;">616</div>
<div class="t" style="left:67.3px;top:292px;font-size:13px;line-height:13px;color:#000;letter-spacing:0.00px;">121</div>
<div class="t" style="left:131.3px;top:292px;font-size:13px;line-height:13px;color:#000;letter-spacing:0.00px;">213</div>
<div class="t" style="left:195.3px;top:292px;font-size:13px;line-height:13px;color:#000;letter-spacing:0.00px;">444</div>
<div class="t" style="left:259.3px;top:292px;font-size:13px;line-height:13px;color:#000;letter-spacing:0.00px;">142</div>
<div class="t" style="left:323.3px;top:292px;font-size:13px;line-height:13px;color:#000;letter-spacing:0.00px;">920</div>
<div class="t" style="left:67.3px;top:312px;font-size:13px;line-height:13px;color:#000;letter-spacing:0.00px;">132</div>
<div class="t" style="left:131.3px;top:312px;font-size:13px;line-height:13px;color:#000;letter-spacing:0.00px;">231</div>
<div class="t" style="left:195.3px;top:312px;font-size:13px;line-height:13px;color:#000;letter-spacing:0.00px;">132</div>
<div class="t" style="left:259.3px;top:312px;font-size:13px;line-height:13px;color:#000;letter-spacing:0.00px;">134</div>
<div class="t" style="left:323.3px;top:312px;font-size:13px;line-height:13px;color:#000;letter-spacing:0.00px;">629</div>
<div class="t" style="left:67.3px;top:332px;font-size:13px;line-height:13px;color:#000;letter-spacing:0.00px;">212</div>
<div class="t" style="left:131.3px;top:332px;font-size:13px;line-height:13px;color:#000;letter-spacing:0.00px;">324</div>
<div class="t" style="left:195.3px;top:332px;font-size:13px;line-height:13px;color:#000;letter-spacing:0.00px;">100</div>
<div class="t" style="left:259.3px;top:332px;font-size:13px;line-height:13px;color:#000;letter-spacing:0.00px;">122</div>
<div class="t" style="left:323.3px;top:332px;font-size:13px;line-height:13px;color:#000;letter-spacing:0.00px;">758</div>
<div class="t" style="left:68.3px;top:352px;font-size:13px;line-height:13px;color:#000;letter-spacing:0.00px;">117</div>
<div class="t" style="left:131.3px;top:352px;font-size:13px;line-height:13px;color:#000;letter-spacing:0.00px;">121</div>
<div class="t" style="left:195.3px;top:352px;font-size:13px;line-height:13px;color:#000;letter-spacing:0.00px;">102</div>
<div class="t" style="left:259.3px;top:352px;font-size:13px;line-height:13px;color:#000;letter-spacing:0.00px;">125</div>
<div class="t" style="left:323.3px;top:352px;font-size:13px;line-height:13px;color:#000;letter-spacing:0.00px;">465</div>
<div class="t" style="left:68.3px;top:372px;font-size:13px;line-height:13px;color:#000;letter-spacing:0.00px;">116</div>
<div class="t" style="left:132.3px;top:372px;font-size:13px;line-height:13px;color:#000;letter-spacing:0.00px;">211</div>
<div class="t" style="left:195.3px;top:372px;font-size:13px;line-height:13px;color:#000;letter-spacing:0.00px;">214</div>
<div class="t" style="left:259.3px;top:372px;font-size:13px;line-height:13px;color:#000;letter-spacing:0.00px;">153</div>
<div class="t" style="left:323.3px;top:372px;font-size:13px;line-height:13px;color:#000;letter-spacing:0.00px;">694</div>
<div class="t" style="left:67.3px;top:392px;font-size:13px;line-height:13px;color:#000;letter-spacing:0.00px;">131</div>
<div class="t" style="left:131.3px;top:392px;font-size:13px;line-height:13px;color:#000;letter-spacing:0.00px;">222</div>
<div class="t" style="left:195.3px;top:392px;font-size:13px;line-height:13px;color:#000;letter-spacing:0.00px;">126</div>
<div class="t" style="left:259.3px;top:392px;font-size:13px;line-height:13px;color:#000;letter-spacing:0.00px;">132</div>
<div class="t" style="left:324.3px;top:392px;font-size:13px;line-height:13px;color:#000;letter-spacing:0.00px;">611</div>
<div style="left:281px;top:246px;width:67px;height:2px;background:#217346"></div>
<div style="left:281px;top:246px;width:2px;height:162px;background:#217346"></div>
<div style="left:346px;top:246px;width:2px;height:162px;background:#217346"></div>
<div style="left:281px;top:406px;width:67px;height:2px;background:#217346"></div>
<div style="left:343px;top:404px;width:7px;height:7px;background:#217346;border:1px solid #fff;box-sizing:border-box"></div>
<svg style="position:absolute;left:284px;top:249px;" width="5" height="5" viewBox="0 0 5 5"><path d="M0 0 H5 L0 5 Z" fill="#217346"/></svg>
<svg style="position:absolute;left:284px;top:269px;" width="5" height="5" viewBox="0 0 5 5"><path d="M0 0 H5 L0 5 Z" fill="#217346"/></svg>
<svg style="position:absolute;left:284px;top:289px;" width="5" height="5" viewBox="0 0 5 5"><path d="M0 0 H5 L0 5 Z" fill="#217346"/></svg>
<svg style="position:absolute;left:284px;top:309px;" width="5" height="5" viewBox="0 0 5 5"><path d="M0 0 H5 L0 5 Z" fill="#217346"/></svg>
<svg style="position:absolute;left:284px;top:329px;" width="5" height="5" viewBox="0 0 5 5"><path d="M0 0 H5 L0 5 Z" fill="#217346"/></svg>
<svg style="position:absolute;left:284px;top:349px;" width="5" height="5" viewBox="0 0 5 5"><path d="M0 0 H5 L0 5 Z" fill="#217346"/></svg>
<svg style="position:absolute;left:284px;top:369px;" width="5" height="5" viewBox="0 0 5 5"><path d="M0 0 H5 L0 5 Z" fill="#217346"/></svg>
<svg style="position:absolute;left:284px;top:389px;" width="5" height="5" viewBox="0 0 5 5"><path d="M0 0 H5 L0 5 Z" fill="#217346"/></svg>
<div style="left:1px;top:617px;width:890px;height:27px;background:#e6e6e6"></div>
<div style="left:1px;top:617px;width:890px;height:1px;background:#a6a6a6"></div>
<svg style="position:absolute;left:27px;top:624px;" width="8" height="10" viewBox="0 0 8 10"><path d="M6 1 V9 L1.5 5 Z" fill="#b8b8b8"/></svg>
<svg style="position:absolute;left:55px;top:624px;" width="8" height="10" viewBox="0 0 8 10"><path d="M1.5 1 V9 L6 5 Z" fill="#b8b8b8"/></svg>
<div style="left:101px;top:620px;width:1px;height:21px;background:#8e8e8e"></div>
<div style="left:166px;top:617px;width:1px;height:24px;background:#a6a6a6"></div>
<div class="t" style="left:114.2px;top:623px;font-size:13px;line-height:13px;color:#444;letter-spacing:-0.62px;">Sheet1</div>
<div style="left:167px;top:618px;width:65px;height:23px;background:#fff"></div>
<div style="left:167px;top:639px;width:65px;height:2px;background:#217346"></div>
<div style="left:232px;top:617px;width:1px;height:24px;background:#a6a6a6"></div>
<div class="t" style="left:178.3px;top:623px;font-size:13px;line-height:13px;color:#217346;letter-spacing:-0.36px;font-weight:bold;">Sheet2</div>
<div class="t" style="left:244.0px;top:623px;font-size:13px;line-height:13px;color:#444;letter-spacing:-0.45px;">Sheet3</div>
<div style="left:296px;top:620px;width:1px;height:21px;background:#8e8e8e"></div>
<svg style="position:absolute;left:328px;top:622px;" width="18" height="17" viewBox="0 0 18 17"><circle cx="9" cy="8.5" r="7.3" fill="none" stroke="#6e6e6e" stroke-width="1.3"/><path d="M9 4.5 V12.5 M5 8.5 H13" stroke="#6e6e6e" stroke-width="1.6"/></svg>
<div style="left:535.5px;top:624.5px;width:2px;height:2px;background:#a8a8a8;border-radius:1px"></div>
<div style="left:535.5px;top:629.5px;width:2px;height:2px;background:#a8a8a8;border-radius:1px"></div>
<div style="left:535.5px;top:634.5px;width:2px;height:2px;background:#a8a8a8;border-radius:1px"></div>
<div style="left:552px;top:623px;width:16px;height:16px;background:#fff;border:1px solid #7a7a7a;box-sizing:border-box"></div>
<svg style="position:absolute;left:556px;top:627px;" width="7" height="8" viewBox="0 0 7 8"><path d="M5.5 0.5 V7.5 L1.5 4 Z" fill="#666"/></svg>
<div style="left:567px;top:623px;width:266px;height:16px;background:#fff;border:1px solid #7a7a7a;box-sizing:border-box"></div>
<div style="left:833px;top:623px;width:22px;height:16px;background:#d9d9d9"></div>
<div style="left:855px;top:623px;width:15px;height:16px;background:#fff;border:1px solid #7a7a7a;box-sizing:border-box"></div>
<svg style="position:absolute;left:860px;top:627px;" width="7" height="8" viewBox="0 0 7 8"><path d="M1.5 0.5 V7.5 L5.5 4 Z" fill="#666"/></svg>
<div style="left:1px;top:644px;width:890px;height:22px;background:#f3f2f1"></div>
<div style="left:1px;top:644px;width:890px;height:1px;background:#dadada"></div>
<div class="t" style="left:9.0px;top:649px;font-size:12px;line-height:12px;color:#444;letter-spacing:-0.74px;">Ready</div>
<svg style="position:absolute;left:58px;top:648px;" width="17" height="15" viewBox="0 0 17 15"><path d="M1.5 12.5 V1.5 H14.5 V6" fill="none" stroke="#444" stroke-width="1.2"/><path d="M1.5 3.5 H14.5" stroke="#444" stroke-width="1.2"/><path d="M3.5 6.5 H6 M3.5 9 H6 M3.5 11.5 H6" stroke="#444" stroke-width="1"/><circle cx="11" cy="10" r="4.3" fill="#f3f2f1" stroke="#444" stroke-width="1.2"/><circle cx="11" cy="10" r="2" fill="#444"/></svg>
<svg style="position:absolute;left:90px;top:647px;" width="17" height="17" viewBox="0 0 17 17"><circle cx="7" cy="2.8" r="1.8" fill="none" stroke="#444" stroke-width="1.1"/><path d="M1.5 4.5 C4 6.5 10 6.5 12.5 4.5 M7 6 C7 9 6.5 12 4.5 15.5" fill="none" stroke="#444" stroke-width="1.2"/><path d="M9 9.5 L15 15.5 M15 9.5 L9 15.5" stroke="#444" stroke-width="1.2"/></svg>
<div class="t" style="left:109.0px;top:649px;font-size:12px;line-height:12px;color:#444;letter-spacing:-0.27px;">Accessibility: Investigate</div>
<div class="t" style="left:324.3px;top:649px;font-size:12px;line-height:12px;color:#444;letter-spacing:-0.55px;">Average: 685.5</div>
<div class="t" style="left:450.4px;top:649px;font-size:12px;line-height:12px;color:#444;letter-spacing:-0.27px;">Count: 8</div>
<div class="t" style="left:510.0px;top:649px;font-size:12px;line-height:12px;color:#444;letter-spacing:-0.70px;">Sum: 5484</div>
<div style="left:580px;top:645px;width:40px;height:21px;background:#d4d4d4"></div>
<svg style="position:absolute;left:592px;top:647px;" width="15" height="15" viewBox="0 0 15 15"><rect x="1.5" y="1.5" width="12" height="12" fill="none" stroke="#444" stroke-width="1.4"/><path d="M5.5 1.5 V13.5 M9.5 1.5 V13.5 M1.5 5.5 H13.5 M1.5 9.5 H13.5" stroke="#444" stroke-width="1.4"/></svg>
<svg style="position:absolute;left:632px;top:647px;" width="16" height="15" viewBox="0 0 16 15"><rect x="1.5" y="1.5" width="13" height="12" fill="none" stroke="#444" stroke-width="1.2"/><rect x="4.5" y="3.5" width="7" height="8" fill="none" stroke="#444" stroke-width="1"/><path d="M6 6 H10 M6 7.7 H10 M6 9.4 H10" stroke="#444" stroke-width="0.9"/></svg>
<svg style="position:absolute;left:672px;top:647px;" width="16" height="15" viewBox="0 0 16 15"><path d="M1.5 1.5 H14.5 V13.5 H1.5 Z M1.5 9.5 H10.5 V1.5 M6 1.5 V6.5" fill="none" stroke="#444" stroke-width="1.2"/></svg>
<div style="left:706px;top:655px;width:8px;height:1px;background:#555"></div>
<div style="left:719px;top:655px;width:100px;height:1px;background:#666"></div>
<div style="left:767px;top:650px;width:4px;height:11px;background:#777"></div>
<svg style="position:absolute;left:822px;top:650px;" width="11" height="11" viewBox="0 0 11 11"><path d="M5.5 1 V10 M1 5.5 H10" stroke="#555" stroke-width="1.1"/></svg>
<div class="t" style="left:845.8px;top:649px;font-size:12px;line-height:12px;color:#444;letter-spacing:-1.37px;">100%</div>
<div style="left:0px;top:35px;width:1px;height:632px;background:#217346"></div>
<div style="left:891px;top:35px;width:1px;height:632px;background:#217346"></div>
<div style="left:0px;top:666px;width:892px;height:1px;background:#217346"></div>
<div style="left:870px;top:208px;width:21px;height:409px;background:#e6e6e6"></div>
<div style="left:873px;top:210px;width:15px;height:16px;background:#fff;border:1px solid #7a7a7a;box-sizing:border-box"></div>
<svg style="position:absolute;left:876px;top:214px;" width="9" height="6" viewBox="0 0 9 6"><path d="M0.5 5 L4.5 0.8 L8.5 5 Z" fill="#666"/></svg>
<div style="left:873px;top:225px;width:15px;height:378px;background:#fff;border:1px solid #7a7a7a;box-sizing:border-box"></div>
<div style="left:873px;top:603px;width:15px;height:14px;background:#fff;border:1px solid #7a7a7a;box-sizing:border-box"></div>
<svg style="position:absolute;left:876px;top:607px;" width="9" height="6" viewBox="0 0 9 6"><path d="M0.5 0.8 H8.5 L4.5 5 Z" fill="#666"/></svg>
<div style="left:669px;top:137px;width:184px;height:467px;background:#fff;border:1px solid #c6c6c6;box-sizing:border-box;box-shadow:2px 2px 3px rgba(0,0,0,0.18)"></div>
<div class="t" style="left:684.0px;top:146px;font-size:13px;line-height:13px;color:#201f1e;letter-spacing:-0.94px;font-weight:bold;">Cell Size</div>
<svg style="position:absolute;left:682px;top:172px;" width="18" height="18" viewBox="0 0 18 18"><path d="M4 2 V15.5 M1.8 4.2 L4 2 L6.2 4.2 M1.8 13.3 L4 15.5 L6.2 13.3" fill="none" stroke="#3a78c3" stroke-width="1.2"/><path d="M16 2.5 H8.5 V15.5 H16" fill="none" stroke="#666" stroke-width="1.1"/></svg>
<div class="t" style="left:708.0px;top:175px;font-size:13px;line-height:13px;color:#201f1e;letter-spacing:-0.54px;">Row Height...</div>
<div style="left:735px;top:187px;width:9px;height:1px;background:#201f1e"></div>
<div class="t" style="left:708.0px;top:203px;font-size:13px;line-height:13px;color:#201f1e;letter-spacing:-0.45px;">AutoFit Row Height</div>
<div style="left:708px;top:215px;width:9px;height:1px;background:#201f1e"></div>
<div style="left:703px;top:225px;width:148px;height:1px;background:#e1e1e1"></div>
<svg style="position:absolute;left:682px;top:231px;" width="18" height="17" viewBox="0 0 18 17"><path d="M2.5 10 V2.5 H15.5 V10" fill="none" stroke="#666" stroke-width="1.1"/><path d="M1.5 13.5 H7.5 M3.7 11.3 L1.5 13.5 L3.7 15.7 M10 13.5 H16.5 M14.3 11.3 L16.5 13.5 L14.3 15.7" fill="none" stroke="#3a78c3" stroke-width="1.2"/></svg>
<div class="t" style="left:708.0px;top:234px;font-size:13px;line-height:13px;color:#201f1e;letter-spacing:-0.53px;">Column Width...</div>
<div style="left:753px;top:246px;width:12px;height:1px;background:#201f1e"></div>
<div class="t" style="left:708.0px;top:262px;font-size:13px;line-height:13px;color:#201f1e;letter-spacing:-0.35px;">AutoFit Column Width</div>
<div style="left:741px;top:274px;width:3px;height:1px;background:#201f1e"></div>
<div class="t" style="left:708.0px;top:290px;font-size:13px;line-height:13px;color:#201f1e;letter-spacing:-0.46px;">Default Width...</div>
<div style="left:708px;top:302px;width:9px;height:1px;background:#201f1e"></div>
<div style="left:671px;top:312px;width:180px;height:1px;background:#e1e1e1"></div>
<div class="t" style="left:684.0px;top:320px;font-size:13px;line-height:13px;color:#201f1e;letter-spacing:-0.72px;font-weight:bold;">Visibility</div>
<div class="t" style="left:708.0px;top:349px;font-size:13px;line-height:13px;color:#201f1e;letter-spacing:-0.37px;">Hide &amp; Unhide</div>
<div style="left:748px;top:361px;width:9px;height:1px;background:#201f1e"></div>
<svg style="position:absolute;left:836px;top:350px;" width="8" height="11" viewBox="0 0 8 11"><path d="M1.5 1 L6 5.5 L1.5 10" fill="none" stroke="#444" stroke-width="1.1"/></svg>
<div style="left:671px;top:371px;width:180px;height:1px;background:#e1e1e1"></div>
<div class="t" style="left:684.0px;top:379px;font-size:13px;line-height:13px;color:#201f1e;letter-spacing:-0.72px;font-weight:bold;">Organize Sheets</div>
<div style="left:689px;top:412px;width:4px;height:4px;background:#f7941d;border-radius:2px"></div>
<div class="t" style="left:708.0px;top:408px;font-size:13px;line-height:13px;color:#201f1e;letter-spacing:-0.98px;">Rename Sheet</div>
<div style="left:708px;top:420px;width:9px;height:1px;background:#201f1e"></div>
<div class="t" style="left:708.0px;top:436px;font-size:13px;line-height:13px;color:#201f1e;letter-spacing:-0.64px;">Move or Copy Sheet...</div>
<div style="left:708px;top:448px;width:11px;height:1px;background:#201f1e"></div>
<div class="t" style="left:708.0px;top:464px;font-size:13px;line-height:13px;color:#201f1e;letter-spacing:-0.48px;">Tab Color</div>
<div style="left:708px;top:476px;width:8px;height:1px;background:#201f1e"></div>
<svg style="position:absolute;left:836px;top:465px;" width="8" height="11" viewBox="0 0 8 11"><path d="M1.5 1 L6 5.5 L1.5 10" fill="none" stroke="#444" stroke-width="1.1"/></svg>
<div style="left:671px;top:486px;width:180px;height:1px;background:#e1e1e1"></div>
<div class="t" style="left:684.0px;top:494px;font-size:13px;line-height:13px;color:#201f1e;letter-spacing:-0.57px;font-weight:bold;">Protection</div>
<svg style="position:absolute;left:682px;top:520px;" width="19" height="18" viewBox="0 0 19 18"><path d="M1.5 1.5 H15.5 V6 M1.5 1.5 V14.5 H9 M1.5 5 H15.5 M1.5 8.5 H9 M1.5 12 H9 M5 1.5 V14.5 M8.5 1.5 V8 M12 1.5 V5" fill="none" stroke="#777" stroke-width="0.9"/><path d="M1.5 14.5 L5 16.5 H9" fill="none" stroke="#777" stroke-width="0.9"/><rect x="10" y="10.5" width="7.5" height="6.5" rx="0.8" fill="#e8c07a"/><path d="M11.7 10.5 V8.8 A2 2 0 0 1 15.8 8.8 V10.5" fill="none" stroke="#e8c07a" stroke-width="1.3"/><rect x="13.3" y="12.5" width="1" height="2.5" fill="#fff"/></svg>
<div class="t" style="left:708.0px;top:523px;font-size:13px;line-height:13px;color:#201f1e;letter-spacing:-0.69px;">Protect Sheet...</div>
<div style="left:708px;top:535px;width:9px;height:1px;background:#201f1e"></div>
<svg style="position:absolute;left:683px;top:548px;" width="15" height="17" viewBox="0 0 15 17"><rect x="1.5" y="7" width="11.5" height="9" rx="1" fill="#e8c07a"/><path d="M4 7 V5 A3.25 3.25 0 0 1 10.5 5 V7" fill="none" stroke="#e8c07a" stroke-width="1.8"/><circle cx="7.25" cy="10.5" r="1.2" fill="#fff"/><rect x="6.75" y="10.5" width="1" height="3" fill="#fff"/></svg>
<div class="t" style="left:708.0px;top:551px;font-size:13px;line-height:13px;color:#201f1e;letter-spacing:-0.63px;">Lock Cell</div>
<div style="left:708px;top:563px;width:7px;height:1px;background:#201f1e"></div>
<div style="left:703px;top:573px;width:148px;height:1px;background:#e1e1e1"></div>
<div style="left:671px;top:575px;width:180px;height:28px;background:#d0d0d0"></div>
<svg style="position:absolute;left:682px;top:578px;" width="18" height="20" viewBox="0 0 18 20"><rect x="2.5" y="2.5" width="13" height="15" fill="#fff" stroke="#555" stroke-width="1"/><rect x="2" y="2" width="14" height="2.5" fill="#3a78c3"/><circle cx="6" cy="8.5" r="1.3" fill="#555"/><circle cx="6" cy="13" r="1.3" fill="none" stroke="#555" stroke-width="0.9"/><path d="M8.5 8.5 H13 M8.5 13 H13" stroke="#555" stroke-width="1"/></svg>
<div class="t" style="left:708.0px;top:582px;font-size:13px;line-height:13px;color:#201f1e;letter-spacing:-0.66px;">Format Cells...</div>
<div style="left:757px;top:594px;width:7px;height:1px;background:#201f1e"></div>
<div style="left:852px;top:576px;width:40px;height:24px;background:#fff;border:1px solid #cfcfcf;box-sizing:border-box;box-shadow:1px 1px 2px rgba(0,0,0,0.15)"></div>
<div class="t" style="left:856.0px;top:582px;font-size:12px;line-height:12px;color:#444;letter-spacing:-0.50px;">Datash</div>
<div style="left:41px;top:418px;width:529px;height:30px;background:#fff"></div>
<div style="left:41px;top:448px;width:529px;height:162px;background:#f0f0f0"></div>
<div class="t" style="left:49.4px;top:426px;font-size:13px;line-height:13px;color:#000;letter-spacing:-0.70px;">Format Cells</div>
<div class="t" style="left:500.0px;top:426px;font-size:13px;line-height:13px;color:#000;letter-spacing:-1.23px;">?</div>
<svg style="position:absolute;left:541px;top:425px;" width="14" height="14" viewBox="0 0 14 14"><path d="M2 2 L12 12 M12 2 L2 12" stroke="#000" stroke-width="1.1"/></svg>
<div style="left:48px;top:476px;width:515px;height:134px;background:#fff;border-left:1px solid #d9d9d9;border-right:1px solid #d9d9d9;border-top:1px solid #d9d9d9;box-sizing:border-box"></div>
<div style="left:49px;top:457px;width:289px;height:20px;background:#f0f0f0;border-top:1px solid #d9d9d9;border-left:1px solid #d9d9d9;box-sizing:border-box"></div>
<div style="left:105px;top:457px;width:1px;height:20px;background:#d9d9d9"></div>
<div style="left:176px;top:457px;width:1px;height:20px;background:#d9d9d9"></div>
<div style="left:230px;top:457px;width:1px;height:20px;background:#d9d9d9"></div>
<div style="left:284px;top:457px;width:1px;height:20px;background:#d9d9d9"></div>
<div style="left:337px;top:455px;width:75px;height:22px;background:#fff;border:1px solid #d9d9d9;border-bottom:none;box-sizing:border-box"></div>
<div class="t" style="left:57.5px;top:463px;font-size:11px;line-height:11px;color:#000;letter-spacing:0.15px;">Number</div>
<div class="t" style="left:115.0px;top:463px;font-size:11px;line-height:11px;color:#000;letter-spacing:0.45px;">Alignment</div>
<div class="t" style="left:192.0px;top:463px;font-size:11px;line-height:11px;color:#000;letter-spacing:0.49px;">Font</div>
<div class="t" style="left:241.0px;top:463px;font-size:11px;line-height:11px;color:#000;letter-spacing:0.16px;">Border</div>
<div class="t" style="left:304.3px;top:463px;font-size:11px;line-height:11px;color:#000;letter-spacing:0.12px;">Fill</div>
<div class="t" style="left:348.3px;top:462px;font-size:11px;line-height:11px;color:#000;letter-spacing:0.24px;">Protection</div>
<div style="left:56px;top:487px;width:13px;height:13px;background:#fff;border:1px solid #333;box-sizing:border-box"></div>
<svg style="position:absolute;left:56px;top:487px;" width="13" height="13" viewBox="0 0 13 13"><path d="M2.5 6.5 L5.2 9.3 L10.5 3.5" fill="none" stroke="#222" stroke-width="1.2"/></svg>
<div style="left:71px;top:486px;width:40px;height:15px;border:1px dotted #333;box-sizing:border-box"></div>
<div class="t" style="left:73.0px;top:489px;font-size:11px;line-height:11px;color:#000;letter-spacing:0.25px;">Locked</div>
<div style="left:73px;top:499px;width:6px;height:1px;background:#000"></div>
<div style="left:56px;top:506px;width:13px;height:13px;background:#fff;border:1px solid #333;box-sizing:border-box"></div>
<div class="t" style="left:73.0px;top:508px;font-size:11px;line-height:11px;color:#000;letter-spacing:0.35px;">Hidden</div>
<div style="left:82px;top:518px;width:3px;height:1px;background:#000"></div>
<div class="t" style="left:56.3px;top:526px;font-size:11px;line-height:11px;color:#000;letter-spacing:0.31px;">Locking cells or hiding formulas has no effect until you protect the worksheet (Review tab,</div>
<div class="t" style="left:56.3px;top:539px;font-size:11px;line-height:11px;color:#000;letter-spacing:0.26px;">Protect group, Protect Sheet button).</div>
<svg style="position:absolute;left:0px;top:0px;pointer-events:none" width="892" height="667" viewBox="0 0 892 667"><line x1="417.6" y1="242" x2="367.88944484371774" y2="280.5238281389967" stroke="#ee1c1c" stroke-width="4.5" stroke-linecap="butt"/><polygon points="350.5,294 365.5381826903469,270.959751273657 367.88944484371774,280.5238281389967 376.56414148571326,285.1874788730624" fill="#ee1c1c"/></svg>
<svg style="position:absolute;left:0px;top:0px;pointer-events:none" width="892" height="667" viewBox="0 0 892 667"><line x1="580" y1="136" x2="642.0498428002863" y2="131.61110867997974" stroke="#ee1c1c" stroke-width="4.5" stroke-linecap="butt"/><polygon points="662,130.2 638.6242548323355,139.87339329586115 642.0498428002863,131.61110867997974 637.4953678883517,123.91326753609025" fill="#ee1c1c"/></svg>
<svg style="position:absolute;left:0px;top:0px;pointer-events:none" width="892" height="667" viewBox="0 0 892 667"><line x1="591" y1="590" x2="644.5" y2="590.0" stroke="#ee1c1c" stroke-width="4.5" stroke-linecap="butt"/><polygon points="663.5,590 640.5,598.0 644.5,590.0 640.5,582.0" fill="#ee1c1c"/></svg>
<svg style="position:absolute;left:0px;top:0px;pointer-events:none" width="892" height="667" viewBox="0 0 892 667"><line x1="191.7" y1="494" x2="136.59956747385147" y2="494.3717977903249" stroke="#ee1c1c" stroke-width="4.5" stroke-linecap="butt"/><polygon points="117.6,494.5 140.54549653795698,486.344989967719 136.59956747385147,494.3717977903249 140.65345629347286,502.3446257351728" fill="#ee1c1c"/></svg>
<svg style="position:absolute;left:0px;top:0px;" width="892" height="667" viewBox="0 0 892 667"><g transform="translate(0.8,1.2)"><path d="M2 4.2 L6 1 V15.2" transform="translate(396.10,269.51) scale(1.000,0.861)" fill="none" stroke="#000" stroke-opacity="0.18" stroke-width="7.4" vector-effect="non-scaling-stroke" stroke-linecap="round" stroke-linejoin="round"/></g><path d="M2 4.2 L6 1 V15.2" transform="translate(396.10,269.51) scale(1.000,0.861)" fill="none" stroke="#e6323a" stroke-width="7.4" vector-effect="non-scaling-stroke" stroke-linecap="round" stroke-linejoin="round"/><path d="M2 4.2 L6 1 V15.2" transform="translate(396.10,269.51) scale(1.000,0.861)" fill="none" stroke="#fff" stroke-width="2.6" vector-effect="non-scaling-stroke" stroke-linecap="round" stroke-linejoin="round"/></svg>
<svg style="position:absolute;left:0px;top:0px;" width="892" height="667" viewBox="0 0 892 667"><g transform="translate(0.8,1.2)"><path d="M1.5 4.5 C1.5 1.8 3.5 0.8 5.5 0.8 C8 0.8 9.5 2.5 9.5 4.5 C9.5 7 7 8.8 1.2 15.2 H9.8" transform="translate(607.17,109.25) scale(0.860,0.812)" fill="none" stroke="#000" stroke-opacity="0.18" stroke-width="7.4" vector-effect="non-scaling-stroke" stroke-linecap="round" stroke-linejoin="round"/></g><path d="M1.5 4.5 C1.5 1.8 3.5 0.8 5.5 0.8 C8 0.8 9.5 2.5 9.5 4.5 C9.5 7 7 8.8 1.2 15.2 H9.8" transform="translate(607.17,109.25) scale(0.860,0.812)" fill="none" stroke="#e6323a" stroke-width="7.4" vector-effect="non-scaling-stroke" stroke-linecap="round" stroke-linejoin="round"/><path d="M1.5 4.5 C1.5 1.8 3.5 0.8 5.5 0.8 C8 0.8 9.5 2.5 9.5 4.5 C9.5 7 7 8.8 1.2 15.2 H9.8" transform="translate(607.17,109.25) scale(0.860,0.812)" fill="none" stroke="#fff" stroke-width="2.6" vector-effect="non-scaling-stroke" stroke-linecap="round" stroke-linejoin="round"/></svg>
<svg style="position:absolute;left:0px;top:0px;" width="892" height="667" viewBox="0 0 892 667"><g transform="translate(0.8,1.2)"><path d="M1.5 3 C2.5 1.2 4 0.8 5.5 0.8 C8 0.8 9.3 2.3 9.3 4 C9.3 6 7.5 7.5 5 7.5 C8 7.5 9.7 9 9.7 11.3 C9.7 13.8 7.5 15.2 5.3 15.2 C3.5 15.2 2 14.5 1.2 13" transform="translate(613.57,562.06) scale(0.776,0.806)" fill="none" stroke="#000" stroke-opacity="0.18" stroke-width="7.4" vector-effect="non-scaling-stroke" stroke-linecap="round" stroke-linejoin="round"/></g><path d="M1.5 3 C2.5 1.2 4 0.8 5.5 0.8 C8 0.8 9.3 2.3 9.3 4 C9.3 6 7.5 7.5 5 7.5 C8 7.5 9.7 9 9.7 11.3 C9.7 13.8 7.5 15.2 5.3 15.2 C3.5 15.2 2 14.5 1.2 13" transform="translate(613.57,562.06) scale(0.776,0.806)" fill="none" stroke="#e6323a" stroke-width="7.4" vector-effect="non-scaling-stroke" stroke-linecap="round" stroke-linejoin="round"/><path d="M1.5 3 C2.5 1.2 4 0.8 5.5 0.8 C8 0.8 9.3 2.3 9.3 4 C9.3 6 7.5 7.5 5 7.5 C8 7.5 9.7 9 9.7 11.3 C9.7 13.8 7.5 15.2 5.3 15.2 C3.5 15.2 2 14.5 1.2 13" transform="translate(613.57,562.06) scale(0.776,0.806)" fill="none" stroke="#fff" stroke-width="2.6" vector-effect="non-scaling-stroke" stroke-linecap="round" stroke-linejoin="round"/></svg>
<svg style="position:absolute;left:0px;top:0px;" width="892" height="667" viewBox="0 0 892 667"><g transform="translate(0.8,1.2)"><path d="M7.5 15.2 V1 L1 10.5 H10" transform="translate(150.13,506.72) scale(0.867,0.854)" fill="none" stroke="#000" stroke-opacity="0.18" stroke-width="7.4" vector-effect="non-scaling-stroke" stroke-linecap="round" stroke-linejoin="round"/></g><path d="M7.5 15.2 V1 L1 10.5 H10" transform="translate(150.13,506.72) scale(0.867,0.854)" fill="none" stroke="#e6323a" stroke-width="7.4" vector-effect="non-scaling-stroke" stroke-linecap="round" stroke-linejoin="round"/><path d="M7.5 15.2 V1 L1 10.5 H10" transform="translate(150.13,506.72) scale(0.867,0.854)" fill="none" stroke="#fff" stroke-width="2.6" vector-effect="non-scaling-stroke" stroke-linecap="round" stroke-linejoin="round"/></svg>
</body></html>
